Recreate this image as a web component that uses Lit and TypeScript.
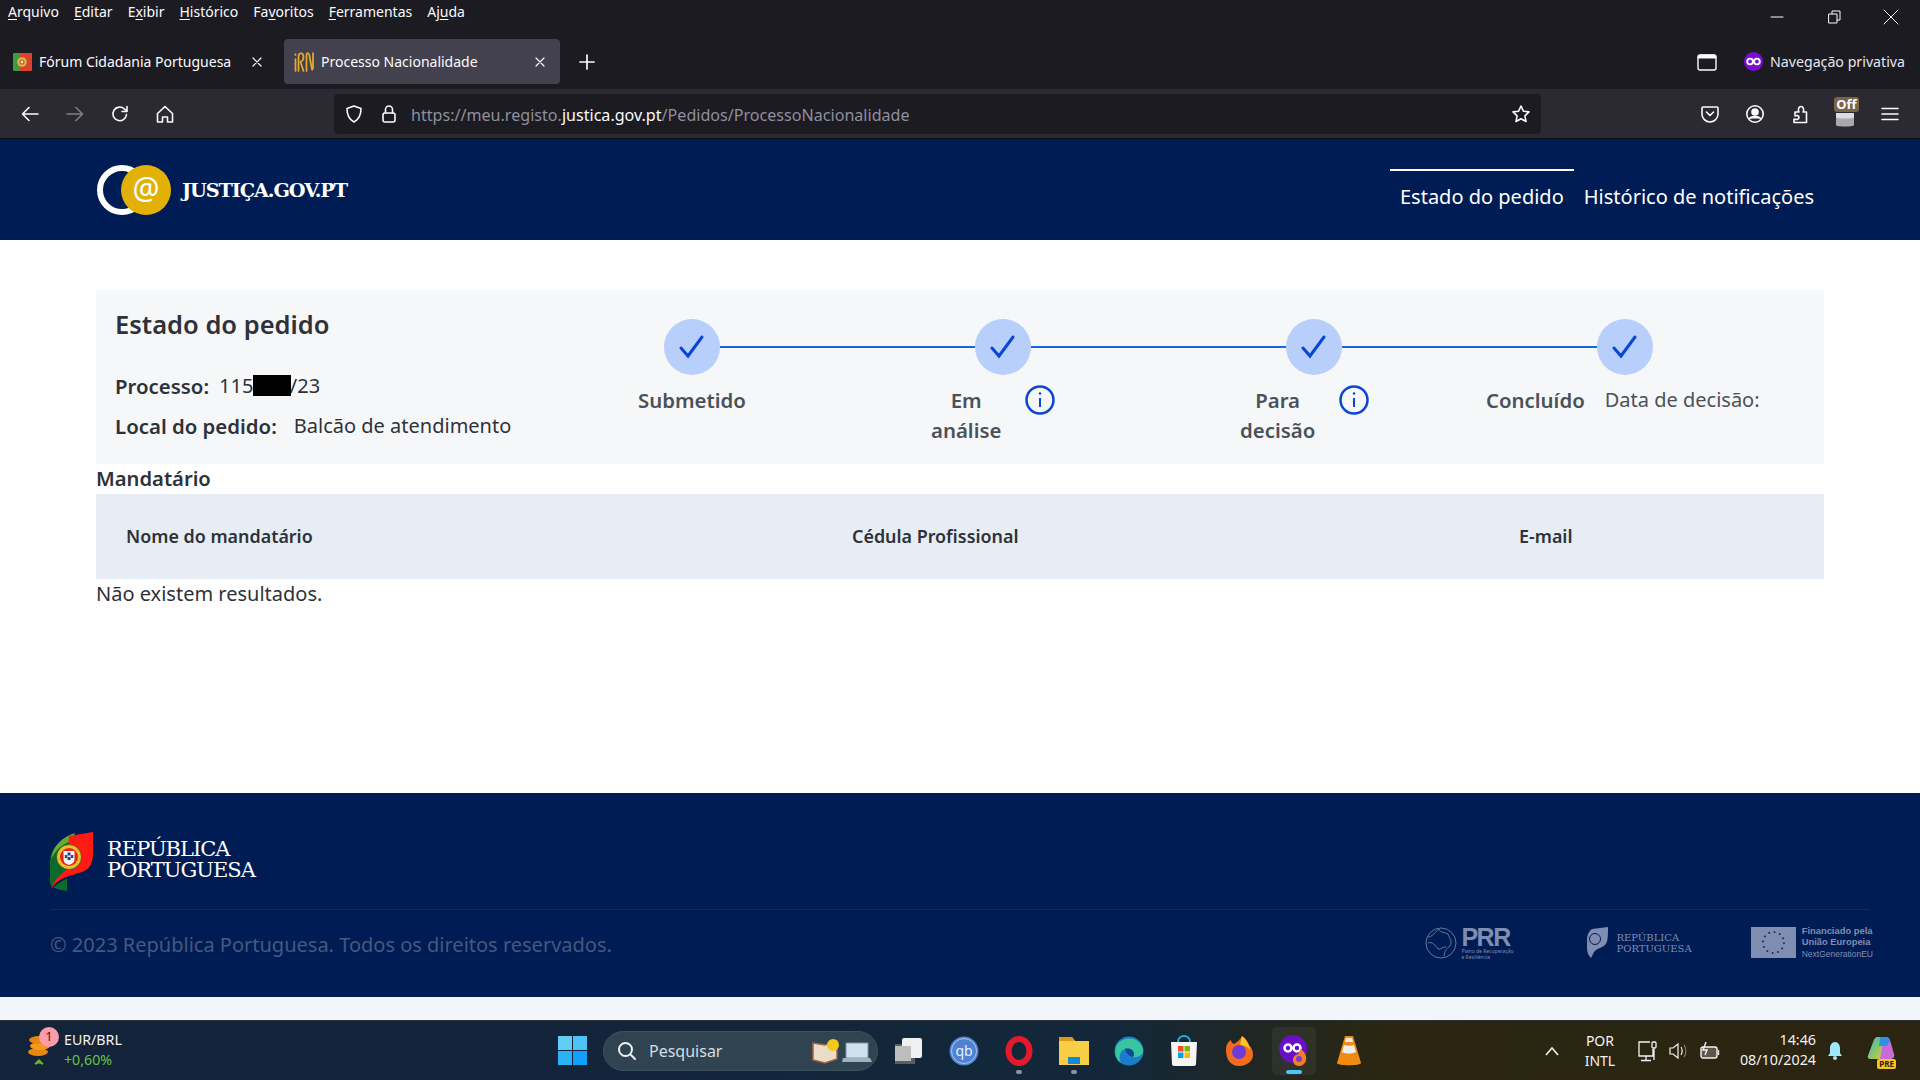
import { LitElement, css, html, svg } from "lit";
import { customElement } from "lit/decorators.js";

const UI_FONT = css`"Noto Sans", "Open Sans", sans-serif`;

// toolbar icon wrapper, all browser icons share the same stroke
const line = (d: unknown, size = 20, box = 20) => html`<svg
  width=${size}
  height=${size}
  viewBox="0 0 ${box} ${box}"
  fill="none"
  stroke="#fbfbfe"
  stroke-width="1.6"
  stroke-linecap="round"
  stroke-linejoin="round"
>
  ${d}
</svg>`;

const privateMask = (size: number) => html`<svg width=${size} height=${size} viewBox="0 0 20 20">
  <circle cx="10" cy="10" r="10" fill="#7d0bd1" />
  <circle cx="6.4" cy="10" r="3" fill="none" stroke="#fff" stroke-width="2" />
  <circle cx="13.6" cy="10" r="3" fill="none" stroke="#fff" stroke-width="2" />
</svg>`;

@customElement("browser-bar")
export class BrowserBar extends LitElement {
  static styles = css`
    :host {
      display: block;
      font-family: ${UI_FONT};
      color: #fbfbfe;
    }
    .menu {
      height: 39px;
      background: #1c1b22;
      display: flex;
      align-items: flex-start;
      padding-left: 8px;
      gap: 15px;
      font-size: 14px;
      line-height: 24px;
      position: relative;
    }
    .menu u {
      text-underline-offset: 2px;
    }
    .winctl {
      margin-left: auto;
      display: flex;
      gap: 37px;
      padding: 7px 19px 0 0;
    }
    .tabs {
      height: 50px;
      background: #1c1b22;
      display: flex;
      align-items: flex-start;
      font-size: 14px;
      line-height: 47px;
    }
    .tab {
      height: 45px;
      width: 276px;
      box-sizing: border-box;
      display: flex;
      align-items: center;
      gap: 7px;
      padding: 0 12px 0 13px;
      border-radius: 4px;
    }
    .tab.first {
      width: 284px;
      padding-right: 19px;
    }
    .tab.active {
      background: #42414d;
      padding-left: 10px;
    }
    .tab .close {
      margin-left: auto;
      display: flex;
    }
    .plus {
      margin: 13px 0 0 17px;
      display: flex;
    }
    .private {
      margin-left: auto;
      display: flex;
      align-items: center;
      height: 45px;
      padding-right: 15px;
      font-size: 14.2px;
      color: #e6e6ee;
    }
    .private .frame {
      margin-right: 27px;
      display: flex;
    }
    .private .mask {
      margin-right: 7px;
      display: flex;
    }
    .toolbar {
      height: 49px;
      background: #2b2a33;
      border-bottom: 1px solid #111;
      display: flex;
      align-items: center;
      padding: 0 20px;
      position: relative;
    }
    .nav {
      display: flex;
      gap: 25px;
      width: 314px;
    }
    .url {
      width: 1207px;
      height: 40px;
      background: #1c1b22;
      border-radius: 4px;
      box-sizing: border-box;
      display: flex;
      align-items: center;
      padding: 0 10px;
      font-size: 16.1px;
      color: #8f8f9d;
      white-space: nowrap;
    }
    .url > span:nth-of-type(2) {
      padding-top: 2px;
    }
    .url .lock {
      margin: 0 12px 0 15px;
      display: flex;
    }
    .url b {
      font-weight: 400;
      color: #fbfbfe;
    }
    .url .star {
      margin-left: auto;
      display: flex;
    }
    .tools {
      margin-left: auto;
      display: flex;
      gap: 25px;
      align-items: center;
    }
    .off {
      position: relative;
      width: 20px;
      height: 20px;
    }
    .off svg {
      position: absolute;
      left: 0;
      top: 7px;
    }
    .off span {
      position: absolute;
      left: -1px;
      top: -7px;
      width: 25px;
      height: 15px;
      background: #7a6448;
      border-radius: 3px;
      font-size: 13px;
      font-weight: 700;
      line-height: 14px;
      text-align: center;
    }
  `;

  render() {
    return html`
      <div class="menu">
        <span><u>A</u>rquivo</span>
        <span><u>E</u>ditar</span>
        <span>E<u>x</u>ibir</span>
        <span><u>H</u>istórico</span>
        <span>Fa<u>v</u>oritos</span>
        <span><u>F</u>erramentas</span>
        <span>Aj<u>u</u>da</span>
        <div class="winctl">
          ${line(svg`<path d="M4 10h12" stroke-width="1"/>`, 20, 20)}
          ${line(svg`<path d="M5 7h8v9H5zM8 7V4h8v9h-3" stroke-width="1"/>`, 20, 20)}
          ${line(svg`<path d="M3 3l14 14M17 3L3 17" stroke-width="1"/>`, 20, 20)}
        </div>
      </div>
      <div class="tabs">
        <div class="tab first">
          <svg width="19" height="18" viewBox="0 0 19 18">
            <rect width="8" height="18" rx="1" fill="#3d9a45" />
            <rect x="7" width="12" height="18" rx="1" fill="#d8442c" />
            <circle cx="9" cy="9" r="4.8" fill="#d9b93a" />
            <circle cx="9" cy="9" r="2.6" fill="#e65a3a" />
            <circle cx="9" cy="9" r="1.2" fill="#f4f4f4" />
          </svg>
          <span>Fórum Cidadania Portuguesa</span>
          <span class="close">${line(svg`<path d="M4 4l8 8M12 4l-8 8" stroke-width="1.2"/>`, 16, 16)}</span>
        </div>
        <div class="tab active">
          <svg width="20" height="24" viewBox="0 0 20 24" fill="none" stroke="#e8ab2e" stroke-width="1.7" stroke-linecap="round">
            <path d="M1.500 4v1M1.500 9v12M4.500 21V7c0-5 5-5 5 0 0 3-1 4-3 5l3 9M12.500 21V6c0-4 2-4 3 0l2 11c.5 4 1.500 3 1.500 0V3" />
          </svg>
          <span>Processo Nacionalidade</span>
          <span class="close">${line(svg`<path d="M4 4l8 8M12 4l-8 8" stroke-width="1.2"/>`, 16, 16)}</span>
        </div>
        <span class="plus">${line(svg`<path d="M10 3v14M3 10h14" stroke-width="1.7"/>`, 20, 20)}</span>
        <div class="private">
          <span class="frame">
            ${line(svg`<rect x="1" y="3" width="18" height="15" rx="2" stroke-width="1.400"/><path d="M1 6h18V5a2 2 0 0 0-2-2H3a2 2 0 0 0-2 2z" fill="#fbfbfe" stroke-width="1"/>`)}
          </span>
          <span class="mask">${privateMask(19)}</span>
          <span>Navegação privativa</span>
        </div>
      </div>
      <div class="toolbar">
        <div class="nav">
          ${line(svg`<path d="M18 10H3M9 3.5L2.5 10 9 16.5"/>`)}
          ${html`<span style="opacity:.4;display:flex">${line(svg`<path d="M2 10h15M11 3.5l6.5 6.5-6.5 6.5"/>`)}</span>`}
          ${line(svg`<path d="M16.5 10.5a6.8 6.8 0 1 1-2-5.5L17 7.5M17 2.5v5h-5"/>`)}
          ${line(svg`<path d="M2.5 9.5L10 2.5l7.5 7V18h-5v-5h-5v5h-5z"/>`)}
        </div>
        <div class="url">
          ${line(svg`<path d="M10 2l7 2.5c0 7-2 11-7 13.5C5 15.500 3 11.500 3 4.500z"/>`)}
          <span class="lock">
            ${line(svg`<rect x="4" y="9" width="12" height="9" rx="2"/><path d="M6.500 9V5.500a3.500 3.500 0 0 1 7 0V9"/>`)}
          </span>
          <span>https://meu.registo.<b>justica.gov.pt</b>/Pedidos/ProcessoNacionalidade</span>
          <span class="star">
            ${line(svg`<path d="M10 2l2.400 5.200 5.600.700-4.100 3.900 1.100 5.700L10 14.700 5 17.500l1.100-5.700L2 7.900l5.600-.700z"/>`)}
          </span>
        </div>
        <div class="tools">
          ${line(svg`<path d="M3 3h14a1 1 0 0 1 1 1v6a8 8 0 0 1-16 0V4a1 1 0 0 1 1-1z"/><path d="M6.500 8l3.500 3.500L13.500 8"/>`)}
          ${line(svg`<circle cx="10" cy="10" r="8.200"/><circle cx="10" cy="8" r="3" fill="#fbfbfe"/><path d="M4.500 14.500c2-2.500 9-2.500 11 0" fill="#fbfbfe"/>`)}
          ${line(svg`<path d="M4 18.500h12.500V8H13c1-1 1-5.500-2-5.500S8 7 9 8H5v4c1.500-1 4-.5 4 1.500S6 16 4 15z"/>`)}
          <div class="off">
            <svg width="20" height="17" viewBox="0 0 20 17">
              <path d="M1 2h18v12c0 2-18 2-18 0z" fill="#a8a8ad" />
              <path d="M1 2h18v4c0 2-18 2-18 0z" fill="#dcdce0" />
            </svg>
            <span>Off</span>
          </div>
          ${line(svg`<path d="M2 4.500h16M2 10h16M2 15.500h16"/>`)}
        </div>
      </div>
    `;
  }
}

@customElement("site-page")
export class SitePage extends LitElement {
  static styles = css`
    :host {
      display: flex;
      flex-direction: column;
      flex: 1;
      min-height: 0;
      font-family: ${UI_FONT};
      font-size: 20px;
      color: #2e3238;
      background: #fff;
    }
    header {
      height: 101px;
      background: #001c54;
      display: flex;
      padding: 0 96px;
      color: #fff;
    }
    .logo {
      display: flex;
      align-items: center;
      gap: 11px;
      height: 101px;
    }
    .logo strong {
      font-family: "DejaVu Serif", serif;
      font-size: 19.3px;
      letter-spacing: -1.100px;
      padding-top: 2px;
    }
    nav {
      margin-left: auto;
      display: flex;
      gap: 0;
      padding-top: 30px;
      line-height: 52px;
    }
    nav a {
      padding: 0 10px;
      border-top: 2px solid transparent;
      height: 56px;
    }
    nav a.on {
      border-top-color: #fff;
    }
    main {
      flex: 1;
      padding: 50px 96px 0;
    }
    .panel {
      height: 174px;
      box-sizing: border-box;
      background: #f6f7f9;
      display: flex;
      padding-left: 19px;
    }
    .summary {
      width: 522px;
      padding-top: 17px;
    }
    .summary h2 {
      margin: 0 0 25px;
      font-size: 25.5px;
      line-height: 34px;
      font-weight: 600;
    }
    .summary p {
      margin: 0;
      height: 40px;
      line-height: 40px;
      display: flex;
    }
    .summary b {
      font-size: 20.4px;
      font-weight: 600;
      margin-right: 10px;
    }
    .summary p + p b {
      margin-right: 17px;
    }
    .masked {
      position: relative;
    }
    .masked i {
      position: absolute;
      left: 34px;
      top: 9px;
      width: 38px;
      height: 21px;
      background: #000;
    }
    .stepper {
      padding-top: 29px;
    }
    .track {
      display: flex;
      align-items: center;
      width: 989px;
      margin-left: 27px;
    }
    .dot {
      width: 56px;
      height: 56px;
      border-radius: 50%;
      background: #b8cffb;
      display: flex;
      align-items: center;
      justify-content: center;
      flex: none;
    }
    .bar {
      flex: 1;
      height: 2px;
      background: #1565e5;
    }
    .labels {
      display: grid;
      grid-template-columns: 293px 309px 246px auto;
      margin: 10px 0 0 1px;
      line-height: 30px;
      color: #4c5158;
      font-size: 20.4px;
      font-weight: 600;
    }
    .step {
      display: flex;
      align-items: flex-start;
    }
    .step span {
      width: min-content;
      text-align: center;
    }
    .step svg {
      margin: 0 0 0 24px;
    }
    .step em {
      font-style: normal;
      font-size: 20px;
      font-weight: 400;
      margin-left: 20px;
      white-space: nowrap;
    }
    h3 {
      margin: 0;
      height: 30px;
      line-height: 28px;
      font-size: 20.2px;
      font-weight: 600;
    }
    .thead {
      height: 85px;
      box-sizing: border-box;
      background: #e6edf5;
      display: grid;
      grid-template-columns: 726px 667px 1fr;
      padding: 0 0 2px 30px;
      align-items: center;
      font-size: 17.9px;
      font-weight: 600;
    }
    .empty {
      margin: 0;
      line-height: 30px;
    }
    footer {
      height: 204px;
      box-sizing: border-box;
      background: #001c54;
      padding: 38px 50px 0;
    }
    .brand {
      display: flex;
      align-items: center;
      gap: 14px;
      height: 60px;
      padding-bottom: 18px;
      border-bottom: 1px solid rgba(255, 255, 255, 0.08);
      color: #fff;
      font-family: "DejaVu Serif", serif;
      font-size: 21px;
      line-height: 21px;
      letter-spacing: -1px;
    }
    .brand div {
      margin-top: -2px;
    }
    .legal {
      display: flex;
      align-items: center;
      height: 68px;
      color: #46587f;
    }
    .partners {
      margin: -3px -3px 0 auto;
      display: flex;
      align-items: center;
      color: #7f8db0;
    }
    .partner {
      display: flex;
      align-items: center;
    }
    .prr b {
      display: block;
      font-family: "Liberation Sans", sans-serif;
      font-size: 25px;
      line-height: 22px;
      letter-spacing: -1.500px;
    }
    .prr small {
      display: block;
      font-size: 5px;
      line-height: 6px;
      white-space: nowrap;
    }
    .rp {
      margin-left: 74px;
      gap: 8px;
      font-family: "DejaVu Serif", serif;
      font-size: 10px;
      line-height: 11px;
    }
    .eu {
      margin-left: 59px;
      gap: 6px;
      font-family: "Liberation Sans", sans-serif;
      font-size: 9.4px;
      line-height: 11.500px;
      font-weight: 700;
    }
    .eu span span {
      font-size: 8.5px;
      font-weight: 400;
    }
  `;

  private check() {
    return html`<svg width="28" height="28" viewBox="0 0 28 28" fill="none" stroke="#0a46d6" stroke-width="3" stroke-linecap="round">
      <path d="M3 15l7 8L24 4" />
    </svg>`;
  }

  private info() {
    return html`<svg width="30" height="30" viewBox="0 0 30 30" fill="none" stroke="#0a46d6" stroke-width="2.500">
      <circle cx="15" cy="15" r="13.500" />
      <path d="M15 13v9" stroke-width="2" />
      <circle cx="15" cy="8.500" r="1.200" fill="#0a46d6" stroke="none" />
    </svg>`;
  }

  render() {
    return html`
      <header>
        <div class="logo">
          <svg width="75" height="50" viewBox="0 0 75 50">
            <circle cx="26" cy="25" r="22" fill="none" stroke="#fff" stroke-width="6" />
            <circle cx="50" cy="25" r="25" fill="#e3b005" />
            <text x="50" y="34" text-anchor="middle" font-family="Noto Sans, sans-serif" font-size="30" fill="#fff">@</text>
          </svg>
          <strong>JUSTIÇA.GOV.PT</strong>
        </div>
        <nav>
          <a class="on">Estado do pedido</a>
          <a>Histórico de notificações</a>
        </nav>
      </header>
      <main>
        <section class="panel">
          <div class="summary">
            <h2>Estado do pedido</h2>
            <p><b>Processo:</b> <span class="masked">115&nbsp;&nbsp;&nbsp;&nbsp;&nbsp;&nbsp;&nbsp;/23<i></i></span></p>
            <p><b>Local do pedido:</b> <span>Balcão de atendimento</span></p>
          </div>
          <div class="stepper">
            <div class="track">
              <div class="dot">${this.check()}</div>
              <div class="bar"></div>
              <div class="dot">${this.check()}</div>
              <div class="bar"></div>
              <div class="dot">${this.check()}</div>
              <div class="bar"></div>
              <div class="dot">${this.check()}</div>
            </div>
            <div class="labels">
              <div class="step"><span>Submetido</span></div>
              <div class="step"><span>Em análise</span>${this.info()}</div>
              <div class="step"><span>Para decisão</span>${this.info()}</div>
              <div class="step"><span>Concluído</span><em>Data de decisão:</em></div>
            </div>
          </div>
        </section>
        <h3>Mandatário</h3>
        <div class="thead">
          <span>Nome do mandatário</span>
          <span>Cédula Profissional</span>
          <span>E-mail</span>
        </div>
        <p class="empty">Não existem resultados.</p>
      </main>
      <footer>
        <div class="brand">
          <svg width="43" height="60" viewBox="0 0 43 60">
            <path d="M24 3C10 8 1 17 0 30v22c0 4 8 7 17 8V40L24 3z" fill="#0d6a2f" />
            <path d="M25 2C12 6 3 15 1 28 6 18 14 12 22 10z" fill="#63ad33" />
            <path d="M19 5L43 1c1 14 1 28-3 34-4 6-10 6-17 9-9 3-16 7-22 14 3-9 9-14 15-19z" fill="#ff1a14" />
            <path d="M1 58c5-8 13-12 22-14 2 0 3-1 5-1-9 3-19 8-27 15z" fill="#001c54" />
            <circle cx="19" cy="26" r="12.500" fill="#e7c12d" stroke="#1d3d1d" stroke-width="0.600" />
            <circle cx="19" cy="26" r="9" fill="#e5231b" />
            <path d="M13.500 20h11v8c0 4-3 5-5.500 6-2.500-1-5.500-2-5.500-6z" fill="#f5f5f5" />
            <rect x="17.500" y="21.500" width="3" height="3" fill="#23408e" />
            <rect x="17.500" y="26" width="3" height="3" fill="#23408e" />
            <rect x="14.800" y="24" width="2.500" height="3" fill="#23408e" />
            <rect x="20.800" y="24" width="2.500" height="3" fill="#23408e" />
          </svg>
          <div>REPÚBLICA<br />PORTUGUESA</div>
        </div>
        <div class="legal">
          <span>© 2023 República Portuguesa. Todos os direitos reservados.</span>
          <div class="partners">
            <div class="partner prr">
              <svg width="32" height="32" viewBox="0 0 32 32" fill="none" stroke="#7f8db0" stroke-width="0.800" style="margin-right:4px">
                <circle cx="16" cy="16" r="15" />
                <path d="M3 10c4 0 6-4 11-8 1 4 6 3 9 5 1 4 5 7 2 12-3 2-5 4-6 10M3 16c4-2 8 3 10 6 3 1 5-3 8-2" />
              </svg>
              <div>
                <b>PRR</b>
                <small>Plano de Recuperação<br />e Resiliência</small>
              </div>
            </div>
            <div class="partner rp">
              <svg width="21" height="31" viewBox="0 0 21 31">
                <path d="M5 2L21 0c0 9 0 15-3 18-3 3-8 3-11 7l-3 6c-3-3-4-6-4-10V12C0 8 2 4 5 2z" fill="#7f8db0" />
                <circle cx="8" cy="12" r="5.500" fill="none" stroke="#001c54" stroke-width="1" />
              </svg>
              <div>REPÚBLICA<br />PORTUGUESA</div>
            </div>
            <div class="partner eu">
              <svg width="45" height="31" viewBox="0 0 45 31">
                <rect width="45" height="31" fill="#7f8db0" />
                <circle cx="22.500" cy="15.500" r="10.500" fill="none" stroke="#001c54" stroke-width="1.600" stroke-dasharray="1.600 3.900" />
              </svg>
              <span>Financiado pela<br />União Europeia<br /><span>NextGenerationEU</span></span>
            </div>
          </div>
        </div>
      </footer>
      <div style="height:23px;background:#f2f5f9;flex:none"></div>
    `;
  }
}

@customElement("task-bar")
export class TaskBar extends LitElement {
  static styles = css`
    :host {
      display: flex;
      align-items: center;
      height: 60px;
      box-sizing: border-box;
      border-top: 1px solid #2b3036;
      background: linear-gradient(90deg, #13233a 0%, #13253a 40%, #12283a 58%, #2b2611 72%, #2a2411 100%);
      font-family: ${UI_FONT};
      color: #f3f3f3;
      font-size: 14px;
      position: relative;
    }
    .widget {
      width: 558px;
      box-sizing: border-box;
      display: flex;
      align-items: center;
      padding-left: 26px;
      gap: 10px;
      font-size: 14.2px;
      line-height: 20px;
      position: relative;
      top: -1px;
    }
    .widget .green {
      color: #66c14a;
      display: block;
    }
    .badge {
      position: absolute;
      left: 39px;
      top: -3px;
      width: 20px;
      height: 20px;
      border-radius: 50%;
      background: #fb9ca8;
      color: #222;
      font-size: 12px;
      line-height: 20px;
      text-align: center;
    }
    .search {
      width: 275px;
      height: 40px;
      margin: 0 9px 0 16px;
      box-sizing: border-box;
      border-radius: 20px;
      background: #2f4450;
      border: 1px solid #3e525d;
      display: flex;
      align-items: center;
      padding: 0 4px 0 13px;
      gap: 12px;
      font-size: 16px;
      color: #d8dde0;
    }
    .search svg:last-child {
      margin-left: auto;
    }
    .apps {
      display: flex;
      gap: 11px;
    }
    .app {
      width: 44px;
      height: 48px;
      display: flex;
      align-items: center;
      justify-content: center;
      border-radius: 5px;
      position: relative;
    }
    .app.on {
      background: rgba(255, 255, 255, 0.05);
    }
    .app::after {
      content: "";
      position: absolute;
      left: 19px;
      bottom: 1px;
      width: 6px;
      height: 4px;
      border-radius: 2px;
    }
    .app.open::after {
      background: #8e9498;
    }
    .app.on::after {
      background: #4fc3f7;
      left: 14px;
      width: 16px;
    }
    .tray {
      margin-left: auto;
      display: flex;
      align-items: center;
      padding-right: 24px;
    }
    .lang {
      width: 50px;
      margin-left: 16px;
      text-align: center;
      line-height: 20px;
    }
    .sys {
      display: flex;
      gap: 11px;
      align-items: center;
      margin-left: 13px;
    }
    .clock {
      margin-left: 20px;
      margin-top: -1px;
      text-align: right;
      font-size: 14.3px;
      line-height: 20px;
      white-space: nowrap;
    }
    .bell {
      margin: 0 23px 0 11px;
      display: flex;
    }
    .pre {
      position: relative;
      display: flex;
    }
    .pre span {
      position: absolute;
      right: 0;
      bottom: -3px;
      background: #f5c518;
      color: #222;
      font-size: 8px;
      font-weight: 700;
      line-height: 10px;
      padding: 0 2px;
      border-radius: 2px;
    }
  `;

  render() {
    return html`
      <div class="widget">
        <svg width="28" height="38" viewBox="0 0 28 38">
          <ellipse cx="12" cy="21" r="10" rx="10" ry="4" fill="#e8860f" />
          <ellipse cx="14" cy="15" rx="10" ry="4" fill="#f29a1c" />
          <ellipse cx="13" cy="9" rx="10" ry="4" fill="#e8860f" />
          <path d="M9 33l4-4 4 4-4-1.500z" fill="#6bb324" stroke="#6bb324" stroke-width="1.500" />
        </svg>
        <span class="badge">1</span>
        <div>EUR/BRL<span class="green">+0,60%</span></div>
      </div>
      <svg width="29" height="29" viewBox="0 0 29 29">
        <rect width="14" height="14" fill="#5fcdf6" />
        <rect x="15" width="14" height="14" fill="#4cc2f5" />
        <rect y="15" width="14" height="14" fill="#2bb1f7" />
        <rect x="15" y="15" width="14" height="14" fill="#12a0fa" />
      </svg>
      <div class="search">
        <svg width="20" height="20" viewBox="0 0 20 20" fill="none" stroke="#eef1f3" stroke-width="2" stroke-linecap="round">
          <circle cx="8.500" cy="8.500" r="6.500" /><path d="M13.500 13.500L18 18" />
        </svg>
        <span>Pesquisar</span>
        <svg width="62" height="26" viewBox="0 0 62 26">
          <path d="M2 5l12 2 12-4v18l-12 4-12-3z" fill="#e9ddc7" stroke="#a4623f" stroke-width="1.500" />
          <circle cx="22" cy="7" r="6" fill="#f2c81b" />
          <rect x="35" y="5" width="22" height="15" fill="#cfe0ee" stroke="#7d93a5" />
          <path d="M32 20h27l2 4H31z" fill="#9fb2c2" />
        </svg>
      </div>
      <div class="apps">
        <div class="app">
          <svg width="30" height="30" viewBox="0 0 30 30">
            <rect x="1" y="8" width="20" height="20" fill="#5d5d5d" />
            <rect x="8" y="2" width="20" height="20" rx="2" fill="#f0f0f0" />
            <rect x="1" y="10" width="16" height="15" fill="#bdbdbd" />
          </svg>
        </div>
        <div class="app">
          <svg width="30" height="30" viewBox="0 0 30 30">
            <circle cx="15" cy="15" r="14.500" fill="#4f83d1" />
            <circle cx="15" cy="15" r="12.500" fill="none" stroke="#a9c7ee" stroke-width="1" />
            <text x="15" y="20" text-anchor="middle" font-family="Noto Sans, sans-serif" font-size="14" fill="#e8f0fb">qb</text>
          </svg>
        </div>
        <div class="app open">
          <svg width="30" height="30" viewBox="0 0 30 30" fill="none">
            <ellipse cx="15" cy="15" rx="10.500" ry="12" stroke="#e5192b" stroke-width="6" />
          </svg>
        </div>
        <div class="app open">
          <svg width="30" height="30" viewBox="0 0 30 30">
            <path d="M0 1h13l3 4H30v24H0z" fill="#f7ce46" />
            <path d="M0 1h13l3 4H0z" fill="#d99a18" />
            <rect x="9" y="21" width="12" height="7" fill="#0f8adf" />
          </svg>
        </div>
        <div class="app">
          <svg width="30" height="30" viewBox="0 0 30 30">
            <circle cx="15" cy="15" r="14.500" fill="#1b7cc9" />
            <path d="M2 11C6 1 24-2 29 13c1 6-5 9-10 8 3-5-2-10-8-8-5 2-7 7-4 14C2 24 0 17 2 11z" fill="#37c6a0" />
            <path d="M11 13c6-2 11 3 8 8-4-1-7-4-8-8z" fill="#0e4a8f" />
          </svg>
        </div>
        <div class="app">
          <svg width="30" height="32" viewBox="0 0 30 32">
            <path d="M9 7c0-4 3-6 6-6s6 2 6 6" fill="none" stroke="#19b6e8" stroke-width="2" />
            <path d="M2 7h26l-1 22c0 1-1 2-2 2H5c-1 0-2-1-2-2z" fill="#f5f5f5" />
            <rect x="9" y="11" width="5.500" height="5.500" fill="#f25022" />
            <rect x="15.500" y="11" width="5.500" height="5.500" fill="#7fba00" />
            <rect x="9" y="17.500" width="5.500" height="5.500" fill="#00a4ef" />
            <rect x="15.500" y="17.500" width="5.500" height="5.500" fill="#ffb900" />
          </svg>
        </div>
        <div class="app">
          <svg width="30" height="30" viewBox="0 0 30 30">
            <path d="M2 14C2 8 5 5 7 4c0 3 2 3 3 4 3-2 6-4 8-8 4 3 6 6 7 9 3 3 4 6 4 10 0 6-6 11-14 11S2 24 2 14z" fill="#f56a1d" />
            <path d="M18 0c4 3 7 8 8 14-3-4-7-5-10-5z" fill="#ffc325" />
            <circle cx="15" cy="16" r="7" fill="#6e3bd6" />
          </svg>
        </div>
        <div class="app on">
          <svg width="30" height="32" viewBox="0 0 30 32">
            <circle cx="14" cy="14" r="14" fill="#6a0fc4" />
            <circle cx="9" cy="13" r="3.500" fill="none" stroke="#fff" stroke-width="2.500" />
            <circle cx="18" cy="13" r="3.500" fill="none" stroke="#fff" stroke-width="2.500" />
            <path d="M21 14c4 2 7 6 6 11-1 4-4 6-7 6-4 0-6-3-6-6 0-4 3-5 5-6 1 0 2-3 2-5z" fill="#f5801f" />
            <circle cx="20" cy="24" r="3" fill="#7a3bd8" />
          </svg>
        </div>
        <div class="app">
          <svg width="28" height="32" viewBox="0 0 28 32">
            <path d="M10 1h8l8 27c0 3-24 3-24 0z" fill="#f08a12" />
            <path d="M9 10c3 1 7 1 10 0l2 7c-4 2-10 2-14 0z" fill="#eee" />
            <path d="M11 3h6l1 4h-8z" fill="#eee" />
          </svg>
        </div>
      </div>
      <div class="tray">
        <svg width="14" height="10" viewBox="0 0 14 10" fill="none" stroke="#f3f3f3" stroke-width="1.600">
          <path d="M1 9l6-7 6 7" />
        </svg>
        <div class="lang">POR<br />INTL</div>
        <div class="sys">
          <svg width="20" height="22" viewBox="0 0 20 22" fill="none" stroke="#f3f3f3" stroke-width="1.300">
            <path d="M12 2H1v14h14V9M8 16v4M3 20.500h10M16 9v11" /><rect x="14" y="2" width="4" height="6" rx="1" />
          </svg>
          <svg width="20" height="18" viewBox="0 0 20 18" fill="none" stroke="#f3f3f3" stroke-width="1.200">
            <path d="M1 6h3l5-4v14l-5-4H1z" /><path d="M12 5c1.500 2 1.500 6 0 8" /><path d="M15 3c2.500 3 2.500 9 0 12" stroke="#77776f" />
          </svg>
          <svg width="20" height="18" viewBox="0 0 20 18" fill="none" stroke="#f3f3f3" stroke-width="1.400">
            <rect x="1" y="5" width="16" height="11" rx="2" fill="#f3f3f3" fill-opacity="0.250" /><path d="M18.500 8v5" /><path d="M6 0L3 8h4l-2 5" />
          </svg>
        </div>
        <div class="clock">14:46<br />08/10/2024</div>
        <span class="bell">
          <svg width="16" height="20" viewBox="0 0 16 20">
            <path d="M8 1c3 0 5 3 5 6v5l2 3H1l2-3V7c0-3 2-6 5-6z" fill="#9fe6ff" />
            <circle cx="8" cy="17" r="2" fill="#9fe6ff" />
          </svg>
        </span>
        <span class="pre">
          <svg width="30" height="30" viewBox="0 0 30 30">
            <defs>
              <linearGradient id="cop" x1="0" y1="0" x2="1" y2="1">
                <stop offset="0" stop-color="#2fb6e8" />
                <stop offset="0.500" stop-color="#7fc76b" />
                <stop offset="1" stop-color="#e9c24a" />
              </linearGradient>
            </defs>
            <path d="M2 20L8 4c1-2 2-3 4-3h8c2 0 3 1 4 3l4 14c1 3-1 5-4 5H6c-3 0-5-1-4-3z" fill="#c66bd8" />
            <path d="M2 20L8 4c1-2 2-3 4-3h6l-4 22H6c-3 0-5-1-4-3z" fill="url(#cop)" />
            <path d="M14 1h6c2 0 3 1 4 3l-3 6h-8z" fill="#2f8fe0" />
          </svg>
          <span>PRE</span>
        </span>
      </div>
    `;
  }
}

@customElement("app-root")
export class AppRoot extends LitElement {
  static styles = css`
    :host {
      display: flex;
      flex-direction: column;
      width: 1920px;
      height: 1080px;
      overflow: hidden;
    }
  `;

  render() {
    return html`<browser-bar></browser-bar><site-page></site-page><task-bar></task-bar>`;
  }
}
